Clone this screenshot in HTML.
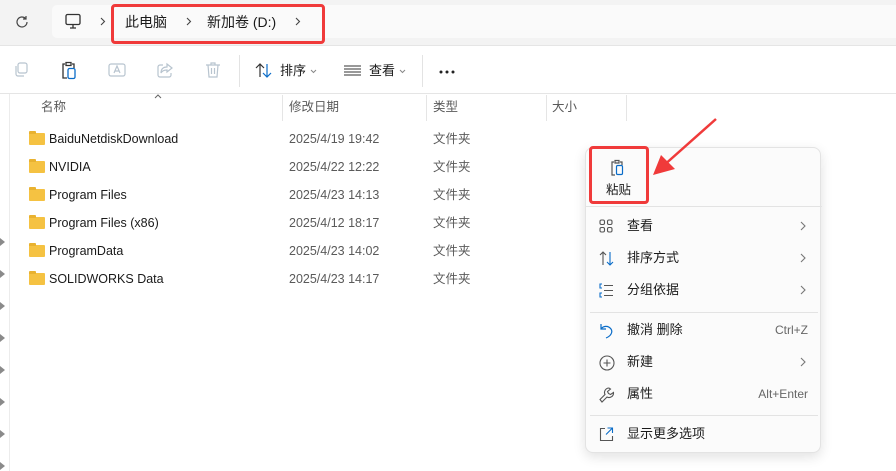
<!DOCTYPE html>
<html><head><meta charset="utf-8"><style>
*{margin:0;padding:0;box-sizing:border-box}
body{width:896px;height:471px;overflow:hidden;background:#fff;font-family:"Liberation Sans","Noto Sans CJK SC",sans-serif;font-size:12.5px;line-height:16px;color:#1a1a1a;position:relative}
.abs{position:absolute}
.top{left:0;top:0;width:896px;height:46px;background:#f3f3f3;border-bottom:1px solid #e5e5e5}
.addr{left:52px;top:5px;width:850px;height:33px;background:#fafafa;border-radius:5px}
.red{border:3px solid #f03a3a;border-radius:4px}
.row{left:29px;height:28px;width:480px}
.row .f{position:absolute;left:0;top:6px;width:16px;height:12px;background:#f5c242;border-radius:1px}
.row .f:before{content:"";position:absolute;left:0;top:-2px;width:7px;height:3px;background:#e9b230;border-radius:1px 1px 0 0}
.row span{position:absolute;top:4px}
.g{color:#5a5a5a}
.arr{left:0;width:0;height:0;border-top:4px solid transparent;border-bottom:4px solid transparent;border-left:5px solid #8a8a8a}
.menu{left:585px;top:147px;width:236px;height:306px;background:#fbfbfb;border:1px solid #e3e3e3;border-radius:8px;box-shadow:0 4px 12px rgba(0,0,0,.12)}
.mi{position:absolute;left:0;width:236px;height:32px}
.mi .t{position:absolute;left:41px;top:8px;font-size:13px}
.mi .k{position:absolute;right:14px;top:8px;font-size:12px;color:#666}
.mi .c{position:absolute;right:16px;top:11px}
.mi svg.i{position:absolute;left:13px;top:9px}
.sep{position:absolute;left:4px;width:228px;height:1px;background:#e3e3e3}
</style></head><body>
<div class="abs top"></div>
<div class="abs addr"></div>
<svg class="abs" style="left:14px;top:14px" width="16" height="16" viewBox="0 0 16 16" fill="none" stroke="#444" stroke-width="1.2"><path d="M13 8a5 5 0 1 1-1.5-3.6M12 2v3h-3"/></svg>
<svg class="abs" style="left:64px;top:13px" width="18" height="17" viewBox="0 0 18 17" fill="none" stroke="#333" stroke-width="1.3"><rect x="2" y="1.5" width="14" height="10" rx="1.5"/><path d="M6 15h6M9 11.5V15"/></svg>
<svg class="abs" style="left:100px;top:17px" width="6" height="9" fill="none" stroke="#444" stroke-width="1.1"><path d="M1 1l3.5 3.5L1 8"/></svg>
<div class="abs red" style="left:111px;top:4px;width:214px;height:40px"></div>
<div class="abs" style="left:125px;top:14px;font-size:14px">此电脑</div>
<svg class="abs" style="left:186px;top:17px" width="6" height="9" fill="none" stroke="#444" stroke-width="1.1"><path d="M1 1l3.5 3.5L1 8"/></svg>
<div class="abs" style="left:207px;top:14px;font-size:14px">新加卷 (D:)</div>
<svg class="abs" style="left:295px;top:17px" width="6" height="9" fill="none" stroke="#444" stroke-width="1.1"><path d="M1 1l3.5 3.5L1 8"/></svg>
<!-- toolbar -->
<svg class="abs" style="left:13px;top:62px" width="16" height="16" fill="none" stroke="#b8c4cf" stroke-width="1.2"><rect x="5" y="1" width="9" height="10" rx="2"/><path d="M3 4v8a2 2 0 0 0 2 2h6"/></svg>
<svg class="abs" style="left:60px;top:61px" width="18" height="19" fill="none" stroke-width="1.3"><path stroke="#333" d="M5 3H3v14h4M12 3h2v4M6 1.5h5v3H6z"/><rect stroke="#0a6cc8" x="8" y="7.5" width="7" height="10" rx="1.5"/></svg>
<svg class="abs" style="left:108px;top:61px" width="18" height="18" fill="none" stroke="#b8c4cf" stroke-width="1.2"><rect x="1" y="3" width="16" height="12" rx="2"/><path d="M6 12l3-7 3 7M7 10h4"/></svg>
<svg class="abs" style="left:157px;top:62px" width="17" height="16" fill="none" stroke="#b8c4cf" stroke-width="1.2"><path d="M6 3H3a2 2 0 0 0-2 2v8a2 2 0 0 0 2 2h9a2 2 0 0 0 2-2v-2M10 2l5 4-5 4V8c-3 0-5 1-6 3 0-4 2-6 6-6z"/></svg>
<svg class="abs" style="left:205px;top:61px" width="16" height="18" fill="none" stroke="#b8c4cf" stroke-width="1.2"><path d="M1 4h14M6 4V2h4v2M3 4l1 12h8l1-12M6.5 7v6M9.5 7v6"/></svg>
<div class="abs" style="left:239px;top:55px;width:1px;height:32px;background:#e3e3e3"></div>
<svg class="abs" style="left:255px;top:63px" width="17" height="15" fill="none" stroke-width="1.2"><path stroke="#333" d="M5 14V1M1 5l4-4 4 4"/><path stroke="#0a6cc8" d="M12 1v13M8 10l4 4 4-4"/></svg>
<div class="abs" style="left:280px;top:63px;font-size:13px">排序</div>
<svg class="abs" style="left:310px;top:69px" width="7" height="5" fill="none" stroke="#888"><path d="M1 1l2.5 2.5L6 1"/></svg>
<svg class="abs" style="left:344px;top:65px" width="17" height="11" stroke="#333" stroke-width="1.1"><path d="M0 1h17M0 4h17M0 7h17M0 10h17"/></svg>
<div class="abs" style="left:369px;top:63px;font-size:13px">查看</div>
<svg class="abs" style="left:399px;top:69px" width="7" height="5" fill="none" stroke="#888"><path d="M1 1l2.5 2.5L6 1"/></svg>
<div class="abs" style="left:422px;top:55px;width:1px;height:32px;background:#e3e3e3"></div>
<svg class="abs" style="left:439px;top:70px" width="18" height="4" fill="#222"><circle cx="2" cy="2" r="1.5"/><circle cx="8" cy="2" r="1.5"/><circle cx="14" cy="2" r="1.5"/></svg>
<div class="abs" style="left:0;top:93px;width:896px;height:1px;background:#e5e5e5"></div>
<!-- left pane -->
<div class="abs" style="left:9px;top:94px;width:1px;height:377px;background:#ececec"></div>
<div class="abs arr" style="top:238px"></div><div class="abs arr" style="top:270px"></div><div class="abs arr" style="top:302px"></div><div class="abs arr" style="top:334px"></div><div class="abs arr" style="top:366px"></div><div class="abs arr" style="top:398px"></div><div class="abs arr" style="top:430px"></div><div class="abs arr" style="top:462px"></div>
<!-- header -->
<svg class="abs" style="left:154px;top:94px" width="8" height="5" fill="none" stroke="#666"><path d="M1 4l3-3 3 3"/></svg>
<div class="abs g" style="left:41px;top:99px">名称</div>
<div class="abs" style="left:282px;top:95px;width:1px;height:26px;background:#e5e5e5"></div>
<div class="abs g" style="left:289px;top:99px">修改日期</div>
<div class="abs" style="left:426px;top:95px;width:1px;height:26px;background:#e5e5e5"></div>
<div class="abs g" style="left:433px;top:99px">类型</div>
<div class="abs" style="left:546px;top:95px;width:1px;height:26px;background:#e5e5e5"></div>
<div class="abs g" style="left:552px;top:99px">大小</div>
<div class="abs" style="left:626px;top:95px;width:1px;height:26px;background:#e5e5e5"></div>
<!-- rows -->
<div class="abs row" style="top:127px"><i class="f"></i><span style="left:20px">BaiduNetdiskDownload</span><span class="g" style="left:260px">2025/4/19 19:42</span><span class="g" style="left:404px">文件夹</span></div>
<div class="abs row" style="top:155px"><i class="f"></i><span style="left:20px">NVIDIA</span><span class="g" style="left:260px">2025/4/22 12:22</span><span class="g" style="left:404px">文件夹</span></div>
<div class="abs row" style="top:183px"><i class="f"></i><span style="left:20px">Program Files</span><span class="g" style="left:260px">2025/4/23 14:13</span><span class="g" style="left:404px">文件夹</span></div>
<div class="abs row" style="top:211px"><i class="f"></i><span style="left:20px">Program Files (x86)</span><span class="g" style="left:260px">2025/4/12 18:17</span><span class="g" style="left:404px">文件夹</span></div>
<div class="abs row" style="top:239px"><i class="f"></i><span style="left:20px">ProgramData</span><span class="g" style="left:260px">2025/4/23 14:02</span><span class="g" style="left:404px">文件夹</span></div>
<div class="abs row" style="top:267px"><i class="f"></i><span style="left:20px">SOLIDWORKS Data</span><span class="g" style="left:260px">2025/4/23 14:17</span><span class="g" style="left:404px">文件夹</span></div>
<!-- menu -->
<div class="abs menu">
 <svg style="position:absolute;left:24px;top:11px" width="15" height="18" fill="none" stroke-width="1.2"><path stroke="#555" d="M4 3H2v13h3M10 3h2v3M5 1.5h4v2.5H5z"/><rect stroke="#0a6cc8" x="6.5" y="6.5" width="6" height="9" rx="1.3"/></svg>
 <div style="position:absolute;left:20px;top:34px;font-size:12.5px">粘贴</div>
 <div class="sep" style="top:58px;left:0;width:236px"></div>
 <div class="mi" style="top:62px"><svg class="i" width="14" height="14" fill="none" stroke="#555" stroke-width="1.1"><rect x="1" y="1" width="4.5" height="4.5" rx="1.5"/><rect x="8.5" y="1" width="4.5" height="4.5" rx="1.5"/><rect x="1" y="8.5" width="4.5" height="4.5" rx="1.5"/><rect x="8.5" y="8.5" width="4.5" height="4.5" rx="1.5"/></svg><span class="t">查看</span><svg class="c" width="6" height="10" fill="none" stroke="#777" stroke-width="1.1"><path d="M1 1l4 4-4 4"/></svg></div>
 <div class="mi" style="top:94px"><svg class="i" width="16" height="15" fill="none" stroke-width="1.1"><path stroke="#555" d="M4 14V1M1 4l3-3 3 3"/><path stroke="#0a6cc8" d="M11 1v13M8 11l3 3 3-3"/></svg><span class="t">排序方式</span><svg class="c" width="6" height="10" fill="none" stroke="#777" stroke-width="1.1"><path d="M1 1l4 4-4 4"/></svg></div>
 <div class="mi" style="top:126px"><svg class="i" width="15" height="15" fill="none" stroke-width="1.1"><path stroke="#0a6cc8" d="M3 1H1v4h2M3 10H1v4h2"/><path stroke="#555" d="M5 2.5h9M5 7.5h9M5 12.5h9"/></svg><span class="t">分组依据</span><svg class="c" width="6" height="10" fill="none" stroke="#777" stroke-width="1.1"><path d="M1 1l4 4-4 4"/></svg></div>
 <div class="sep" style="top:164px"></div>
 <div class="mi" style="top:166px"><svg class="i" width="15" height="16" fill="none" stroke="#0a6cc8" stroke-width="1.2"><path d="M2 1v5h5M2 6c2-3 7-4 10 0 2 3 0 7-5 9"/></svg><span class="t">撤消 删除</span><span class="k">Ctrl+Z</span></div>
 <div class="mi" style="top:198px"><svg class="i" width="16" height="16" fill="none" stroke="#555" stroke-width="1.1"><circle cx="8" cy="8" r="7"/><path d="M8 4.5v7M4.5 8h7"/></svg><span class="t">新建</span><svg class="c" width="6" height="10" fill="none" stroke="#777" stroke-width="1.1"><path d="M1 1l4 4-4 4"/></svg></div>
 <div class="mi" style="top:230px"><svg class="i" width="16" height="16" fill="none" stroke="#555" stroke-width="1.1"><path d="M10 1a4.5 4.5 0 0 0-4 6.5L1 12.5l2 2.5 5-5a4.5 4.5 0 0 0 6.5-4.5l-3 2-2-1-1-2 3-2.5z"/></svg><span class="t">属性</span><span class="k">Alt+Enter</span></div>
 <div class="sep" style="top:267px"></div>
 <div class="mi" style="top:270px"><svg class="i" width="15" height="15" fill="none" stroke-width="1.1"><path stroke="#555" d="M6 1.5H1.5v12h12V9"/><path stroke="#0a6cc8" d="M8.5 1h5v5M13.5 1L7 7.5"/></svg><span class="t">显示更多选项</span></div>
</div>
<div class="abs red" style="left:589px;top:146px;width:60px;height:58px"></div>
<svg class="abs" style="left:650px;top:115px" width="70" height="60"><path d="M66 4L12 52" stroke="#f03a3a" stroke-width="2.5"/><path d="M3 60l8-20 14 14z" fill="#f03a3a"/></svg>
</body></html>
